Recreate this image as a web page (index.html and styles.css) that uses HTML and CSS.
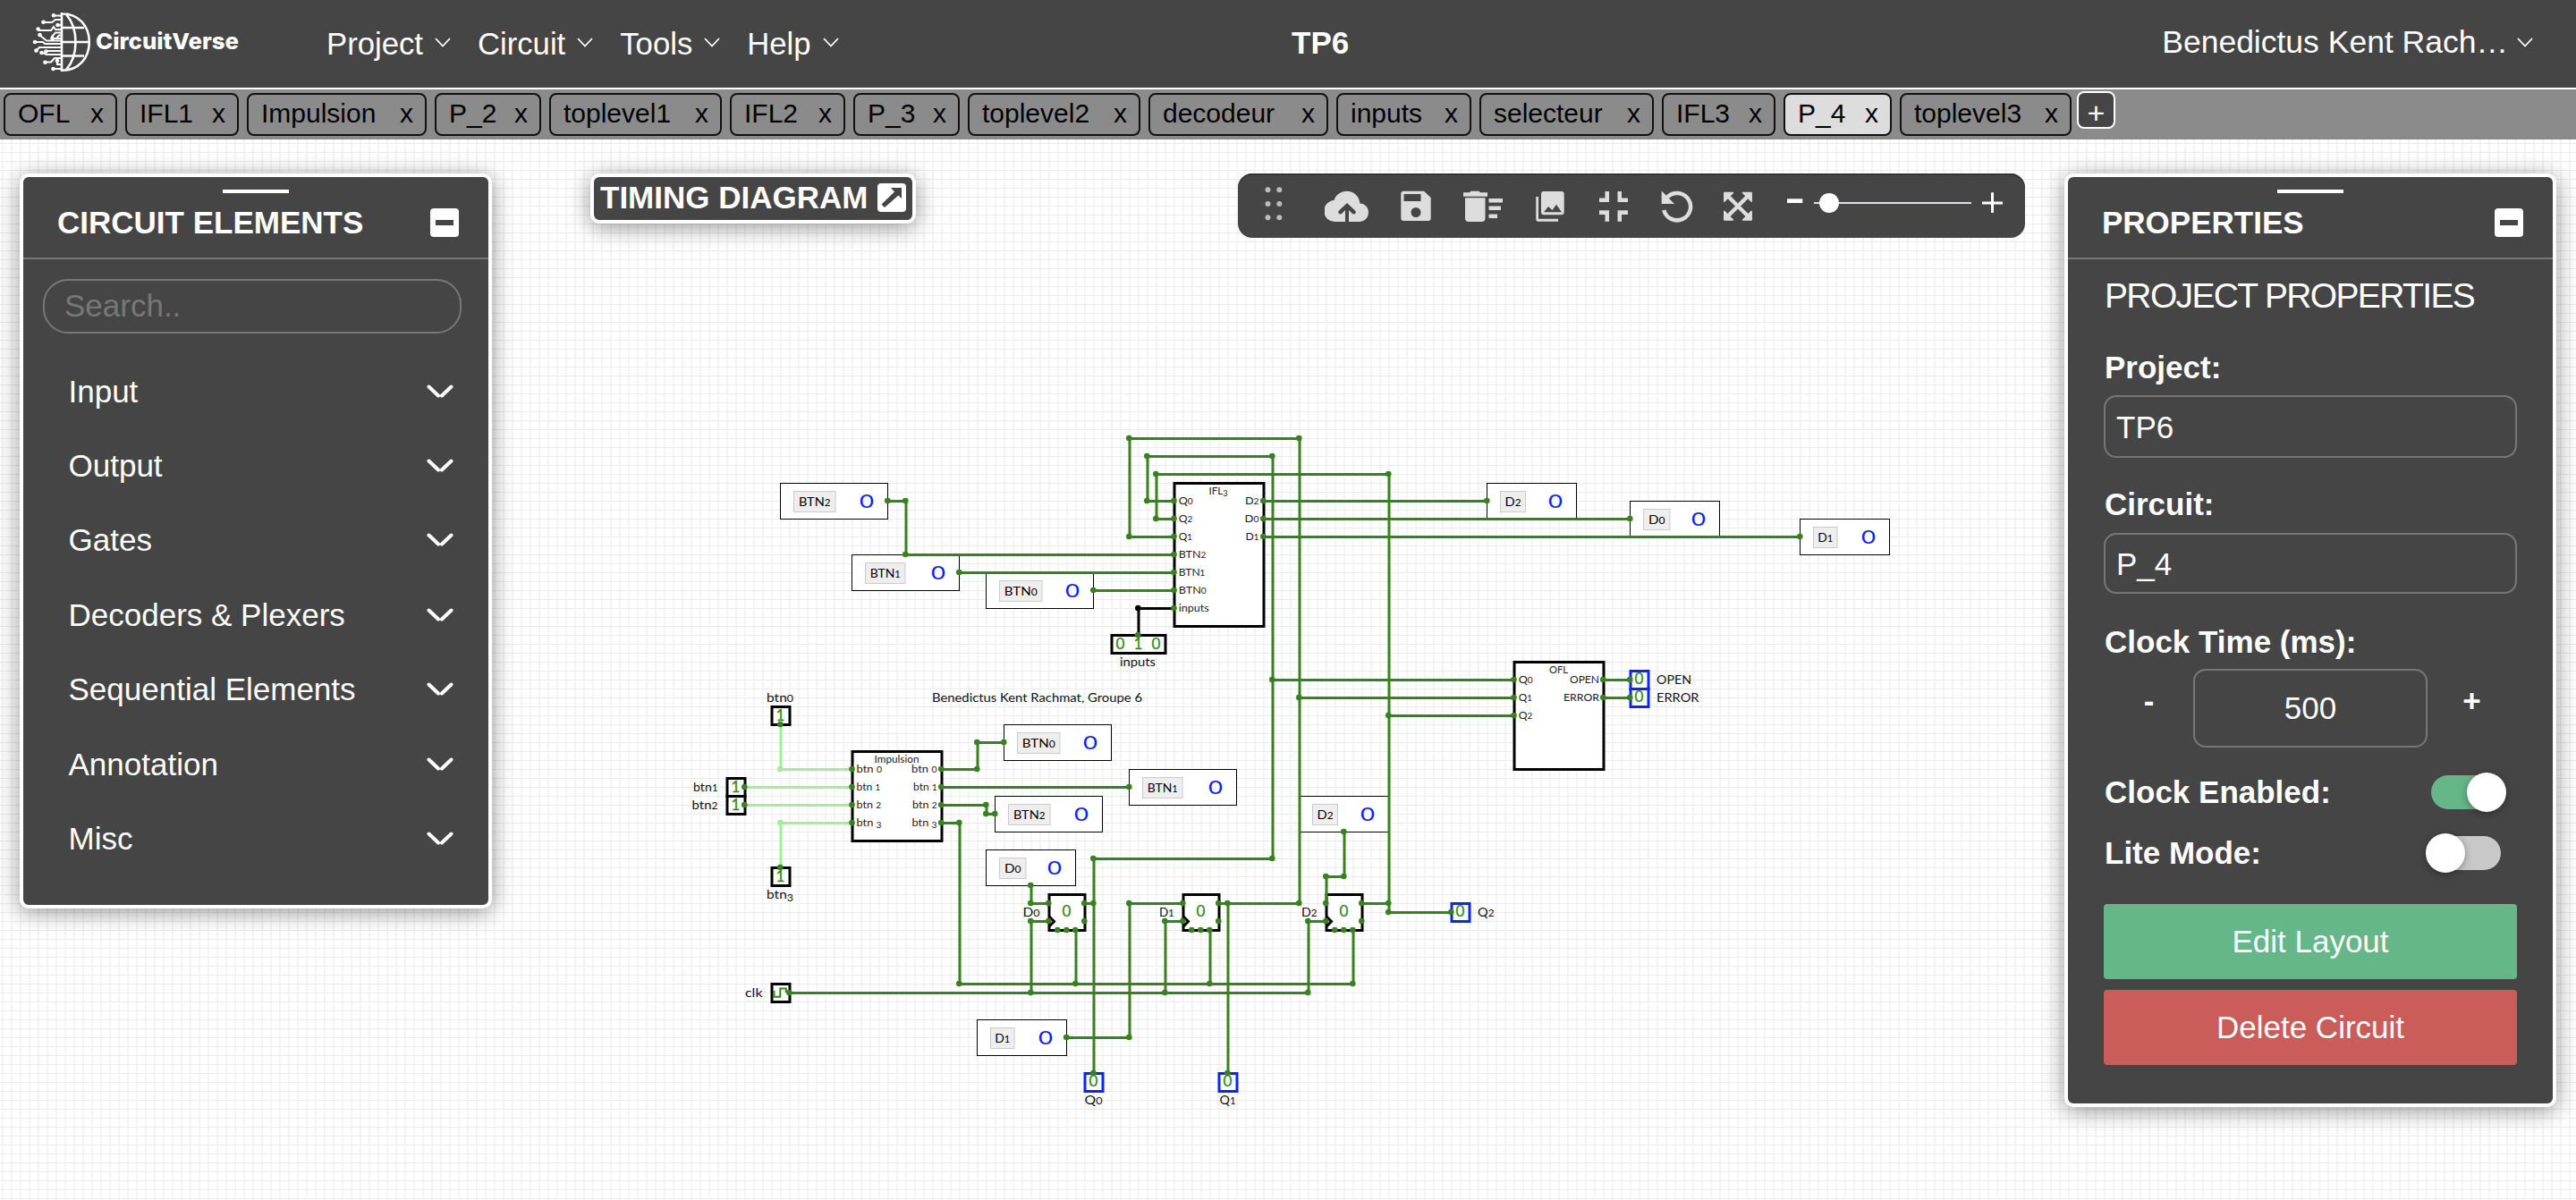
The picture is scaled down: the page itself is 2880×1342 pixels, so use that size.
FILE: index.html
```html
<!DOCTYPE html>
<html lang="en">
<head>
<meta charset="utf-8">
<title>TP6 - CircuitVerse</title>
<link rel="stylesheet" href="styles.css">
</head>
<body>
<header class="navbar">
  <svg class="logo" width="270" height="98" viewBox="20 0 270 98">
    <g fill="none" stroke="#fff" stroke-width="2.6">
      <path d="M69 14V80M69 15.2C88 15.2 99.8 29 99.8 47S88 78.8 69 78.8M74 16C88 32 88 62 74 78M69 31H94M69 47H100M69 62.5H94"/>
    </g>
    <g fill="none" stroke="#fff" stroke-width="2">
      <path d="M69 17.5H61M69 22H62L58 25H49M69 27L65 29M69 33H62L60 30L57 34H43M69 36.500H62L58 41V44M69 39.500H66L63 43H58M69 43H60M69 45.500H52L44 39M69 49H50L48 47H39M69 53H44L41 56M69 57H52M69 61H52L46 58M69 65H61L57 69.500H51M69 72H64V68M69 77H60"/>
    </g>
    <g fill="#fff"><circle cx="60" cy="17.300" r="2.300"/><circle cx="48.500" cy="24.700" r="2.300"/><circle cx="64.500" cy="28" r="2.300"/><circle cx="42.700" cy="32.500" r="2.300"/><circle cx="44.500" cy="39" r="2.300"/><circle cx="58.500" cy="43" r="2.300"/><circle cx="39" cy="47" r="2.300"/><circle cx="40.500" cy="56.500" r="2.300"/><circle cx="51.500" cy="57.500" r="2.300"/><circle cx="46.500" cy="59" r="2.300"/><circle cx="50.500" cy="69.700" r="2.300"/><circle cx="64" cy="68" r="2.300"/><circle cx="59.500" cy="77" r="2.300"/></g>
    <text class="wordmark" x="107" y="55.300" textLength="160" lengthAdjust="spacingAndGlyphs">CircuitVerse</text>
  </svg>
  <nav class="menu">
    <a class="project">Project<svg class="caret" viewBox="0 0 18 11"><path d="M1 1L9 9.500L17 1"/></svg></a>
    <a class="circuit-m">Circuit<svg class="caret" viewBox="0 0 18 11"><path d="M1 1L9 9.500L17 1"/></svg></a>
    <a class="tools">Tools<svg class="caret" viewBox="0 0 18 11"><path d="M1 1L9 9.500L17 1"/></svg></a>
    <a class="help">Help<svg class="caret" viewBox="0 0 18 11"><path d="M1 1L9 9.500L17 1"/></svg></a>
  </nav>
  <div class="project-name">TP6</div>
  <a class="user">Benedictus Kent Rach…<svg class="caret" viewBox="0 0 18 11"><path d="M1 1L9 9.500L17 1"/></svg></a>
</header>

<div class="tabs">
  <div class="tab"><span>OFL</span><span>x</span></div>
  <div class="tab"><span>IFL1</span><span>x</span></div>
  <div class="tab"><span>Impulsion</span><span>x</span></div>
  <div class="tab"><span>P_2</span><span>x</span></div>
  <div class="tab"><span>toplevel1</span><span>x</span></div>
  <div class="tab"><span>IFL2</span><span>x</span></div>
  <div class="tab"><span>P_3</span><span>x</span></div>
  <div class="tab"><span>toplevel2</span><span>x</span></div>
  <div class="tab"><span>decodeur</span><span>x</span></div>
  <div class="tab"><span>inputs</span><span>x</span></div>
  <div class="tab"><span>selecteur</span><span>x</span></div>
  <div class="tab"><span>IFL3</span><span>x</span></div>
  <div class="tab active"><span>P_4</span><span>x</span></div>
  <div class="tab"><span>toplevel3</span><span>x</span></div>
  <button class="add-tab">+</button>
</div>

<main class="canvas">
<svg class="circuit" width="2880" height="1186" viewBox="0 156 2880 1186">
  <!-- Tunnels -->
  <g class="tunnel" transform="translate(872.500 540.500)"><rect width="120" height="40"/><rect class="tag" x="15" y="9" width="46.500" height="23"/><text x="38.200" y="25.200" textLength="35.500" lengthAdjust="spacingAndGlyphs">BTN<tspan class="o">2</tspan></text><text class="val" x="88.400" y="27.700" textLength="16" lengthAdjust="spacingAndGlyphs">0</text></g>
  <g class="tunnel" transform="translate(952.500 620.500)"><rect width="120" height="40"/><rect class="tag" x="15" y="9" width="44.500" height="23"/><text x="37.200" y="25.200" textLength="34" lengthAdjust="spacingAndGlyphs">BTN<tspan class="o">1</tspan></text><text class="val" x="88.400" y="27.700" textLength="16" lengthAdjust="spacingAndGlyphs">0</text></g>
  <g class="tunnel" transform="translate(1102.500 640.500)"><rect width="120" height="40"/><rect class="tag" x="15" y="9" width="47.500" height="23"/><text x="38.700" y="25.200" textLength="37" lengthAdjust="spacingAndGlyphs">BTN<tspan class="o">0</tspan></text><text class="val" x="88.400" y="27.700" textLength="16" lengthAdjust="spacingAndGlyphs">0</text></g>
  <g class="tunnel" transform="translate(1122.500 810.500)"><rect width="120" height="40"/><rect class="tag" x="15" y="9" width="47.500" height="23"/><text x="38.700" y="25.200" textLength="37" lengthAdjust="spacingAndGlyphs">BTN<tspan class="o">0</tspan></text><text class="val" x="88.400" y="27.700" textLength="16" lengthAdjust="spacingAndGlyphs">0</text></g>
  <g class="tunnel" transform="translate(1262.500 860.500)"><rect width="120" height="40"/><rect class="tag" x="15" y="9" width="44.500" height="23"/><text x="37.200" y="25.200" textLength="34" lengthAdjust="spacingAndGlyphs">BTN<tspan class="o">1</tspan></text><text class="val" x="88.400" y="27.700" textLength="16" lengthAdjust="spacingAndGlyphs">0</text></g>
  <g class="tunnel" transform="translate(1112.500 890.500)"><rect width="120" height="40"/><rect class="tag" x="15" y="9" width="46.500" height="23"/><text x="38.200" y="25.200" textLength="35.500" lengthAdjust="spacingAndGlyphs">BTN<tspan class="o">2</tspan></text><text class="val" x="88.400" y="27.700" textLength="16" lengthAdjust="spacingAndGlyphs">0</text></g>
  <g class="tunnel" transform="translate(1102.500 950.500)"><rect width="100" height="40"/><rect class="tag" x="15" y="9" width="29.500" height="23"/><text x="29.700" y="25.200" textLength="18.500" lengthAdjust="spacingAndGlyphs">D<tspan class="o">0</tspan></text><text class="val" x="68.400" y="27.700" textLength="16" lengthAdjust="spacingAndGlyphs">0</text></g>
  <g class="tunnel" transform="translate(1092.500 1140.500)"><rect width="100" height="40"/><rect class="tag" x="15" y="9" width="26.500" height="23"/><text x="28.200" y="25.200" textLength="17" lengthAdjust="spacingAndGlyphs">D<tspan class="o">1</tspan></text><text class="val" x="68.400" y="27.700" textLength="16" lengthAdjust="spacingAndGlyphs">0</text></g>
  <g class="tunnel" transform="translate(1452.500 890.500)"><rect width="100" height="40"/><rect class="tag" x="15" y="9" width="28" height="23"/><text x="29" y="25.200" textLength="18" lengthAdjust="spacingAndGlyphs">D<tspan class="o">2</tspan></text><text class="val" x="68.400" y="27.700" textLength="16" lengthAdjust="spacingAndGlyphs">0</text></g>
  <g class="tunnel" transform="translate(1662.500 540.500)"><rect width="100" height="40"/><rect class="tag" x="15" y="9" width="28" height="23"/><text x="29" y="25.200" textLength="18" lengthAdjust="spacingAndGlyphs">D<tspan class="o">2</tspan></text><text class="val" x="68.400" y="27.700" textLength="16" lengthAdjust="spacingAndGlyphs">0</text></g>
  <g class="tunnel" transform="translate(1822.500 560.500)"><rect width="100" height="40"/><rect class="tag" x="15" y="9" width="29.500" height="23"/><text x="29.700" y="25.200" textLength="18.500" lengthAdjust="spacingAndGlyphs">D<tspan class="o">0</tspan></text><text class="val" x="68.400" y="27.700" textLength="16" lengthAdjust="spacingAndGlyphs">0</text></g>
  <g class="tunnel" transform="translate(2012.500 580.500)"><rect width="100" height="40"/><rect class="tag" x="15" y="9" width="26.500" height="23"/><text x="28.200" y="25.200" textLength="17" lengthAdjust="spacingAndGlyphs">D<tspan class="o">1</tspan></text><text class="val" x="68.400" y="27.700" textLength="16" lengthAdjust="spacingAndGlyphs">0</text></g>

  <!-- Subcircuits, flip-flops, inputs -->
  <g class="box">
    <rect x="1313" y="540.500" width="100" height="160"/>
    <rect x="1693" y="740.500" width="100" height="120"/>
    <rect x="953" y="840.500" width="100" height="100"/>
    <rect x="1173" y="1000.500" width="40" height="40"/>
    <rect x="1323" y="1000.500" width="40" height="40"/>
    <rect x="1483" y="1000.500" width="40" height="40"/>
    <path d="M1173 1025L1178.500 1030.500L1173 1036M1323 1025L1328.500 1030.500L1323 1036M1483 1025L1488.500 1030.500L1483 1036"/>
    <rect x="1243" y="710.500" width="60" height="20"/>
    <rect x="863" y="790.500" width="20" height="20"/>
    <rect x="813" y="870.500" width="20" height="20"/>
    <rect x="813" y="890.500" width="20" height="20"/>
    <rect x="863" y="970.500" width="20" height="20"/>
    <rect x="863" y="1100.500" width="20" height="20"/>
  </g>
  <g class="box out">
    <rect x="1823" y="750.500" width="20" height="20"/>
    <rect x="1823" y="770.500" width="20" height="20"/>
    <rect x="1623" y="1010.500" width="20" height="20"/>
    <rect x="1213" y="1200.500" width="20" height="20"/>
    <rect x="1363" y="1200.500" width="20" height="20"/>
  </g>

  <!-- Wires -->
  <path class="wire high" d="M873 810V860.500H953M833 880.500H953M833 900.500H953M953 920.500H873V970"/>
  <path class="wire bus" d="M1313 680.500H1273V710"/>
  <path class="wire" d="M993 560.500H1013V620.500H1313M1073 640.500H1313M1223 660.500H1313
    M1313 560.500H1283V510.500H1423V960.500H1223V1200
    M1313 580.500H1293V530.500H1553V1020.500H1623
    M1313 600.500H1263V490.500H1453V1010.500H1363M1373 1010V1200
    M1413 560.500H1663M1413 580.500H1823M1413 600.500H2013
    M1423 760.500H1693M1453 780.500H1693M1553 800.500H1693M1793 760.500H1823M1793 780.500H1823
    M1053 860.500H1093V830.500H1123M1053 880.500H1263M1053 900.500H1103V910.500H1113M1053 920.500H1073V1100.500H1513V1040
    M1153 990V1010.500H1173M1213 1010.500H1223M1203 1040V1100M1353 1040V1100
    M883 1110.500H1463V1030.500H1483M1153 1110V1030.500H1173M1303 1110V1030.500H1323
    M1193 1160.500H1263V1010.500H1323M1503 930V980.500H1483V1010M1523 1010.500H1553"/>
  <path class="clock" d="M865.500 1108V1114.800H872.300V1105.500H878.800V1110"/>

  <!-- Nodes: zero-length round-capped strokes -->
  <path class="node high" d="M872.300 860h0M872.300 920h0"/>
  <path class="node bus" d="M1272.300 680h0"/>
  <path class="node" d="M992.300 560h0M1012.300 560h0M1012.300 620h0M1072.300 640h0M1222.300 660h0
    M1262.300 490h0M1452.300 490h0M1282.300 510h0M1422.300 510h0M1292.300 530h0M1552.300 530h0
    M1282.300 560h0M1292.300 580h0M1262.300 600h0
    M1312.500 560h0M1312.500 580h0M1312.500 600h0M1312.500 620h0M1312.500 640h0M1312.500 660h0M1312.500 680h0M1272.300 710h0
    M1412.300 560h0M1412.300 580h0M1412.300 600h0M1662.300 560h0M1822.300 580h0M2012.300 600h0
    M1422.300 760h0M1452.300 780h0M1552.300 800h0M1692.500 760h0M1692.500 780h0M1692.500 800h0M1792.300 760h0M1792.300 780h0M1822.300 760h0M1822.300 780h0
    M872.300 810h0M832.300 880h0M832.300 900h0M872.300 970h0M882.300 1110h0
    M952.500 860h0M952.500 880h0M952.500 900h0M952.500 920h0M1052.300 860h0M1052.300 880h0M1052.300 900h0M1052.300 920h0
    M1092.300 860h0M1092.300 830h0M1122.300 830h0M1262.300 880h0M1102.300 900h0M1102.300 910h0M1112.300 910h0M1072.300 920h0M1072.300 1100h0
    M1152.300 990h0M1152.300 1010h0M1172.300 1010h0M1172.300 1030h0M1152.300 1030h0M1152.300 1110h0M1182.300 1040h0M1192.300 1040h0M1202.300 1040h0M1202.300 1100h0
    M1212.300 1010h0M1212.300 1030h0M1222.300 1010h0M1222.300 960h0M1422.300 960h0M1222.300 1200h0
    M1262.300 1010h0M1262.300 1160h0M1192.300 1160h0M1322.300 1010h0M1322.300 1030h0M1302.300 1030h0M1302.300 1110h0
    M1332.300 1040h0M1342.300 1040h0M1352.300 1040h0M1352.300 1100h0M1362.300 1010h0M1362.300 1030h0M1372.300 1010h0M1372.300 1200h0M1452.300 1010h0
    M1462.300 1110h0M1462.300 1030h0M1482.300 1030h0M1482.300 1010h0M1482.300 980h0M1502.300 980h0M1502.300 930h0
    M1492.300 1040h0M1502.300 1040h0M1512.300 1040h0M1512.300 1100h0M1522.300 1010h0M1522.300 1030h0M1552.300 1010h0M1552.300 1020h0M1622.300 1020h0"/>

  <!-- Bit values -->
  <g class="bit">
    <text x="1252.500" y="725.500">0</text><text x="1272.500" y="725.500">1</text><text x="1292.500" y="725.500">0</text>
    <text x="872.500" y="805.500">1</text><text x="822.500" y="885.500">1</text><text x="822.500" y="905.500">1</text><text x="872.500" y="985.500">1</text>
    <text x="1192.500" y="1025.300">0</text><text x="1342.500" y="1025.300">0</text><text x="1502.500" y="1025.300">0</text>
    <text x="1832.500" y="765.300">0</text><text x="1832.500" y="785.300">0</text><text x="1632.500" y="1025.300">0</text>
    <text x="1222.500" y="1215.300">0</text><text x="1372.500" y="1215.300">0</text>
  </g>

  <!-- Pin names -->
  <g class="pin">
    <text class="mid" x="1362" y="552.700" textLength="21" lengthAdjust="spacingAndGlyphs">IFL<tspan class="o" dy="2">3</tspan></text>
    <text x="1317.700" y="564.200" textLength="16" lengthAdjust="spacingAndGlyphs">Q<tspan class="o">0</tspan></text>
    <text x="1317.700" y="584.200" textLength="15.500" lengthAdjust="spacingAndGlyphs">Q<tspan class="o">2</tspan></text>
    <text x="1317.700" y="604.200" textLength="15" lengthAdjust="spacingAndGlyphs">Q<tspan class="o">1</tspan></text>
    <text x="1317.700" y="624.200" textLength="30.500" lengthAdjust="spacingAndGlyphs">BTN<tspan class="o">2</tspan></text>
    <text x="1317.700" y="644.200" textLength="29.500" lengthAdjust="spacingAndGlyphs">BTN<tspan class="o">1</tspan></text>
    <text x="1317.700" y="664.200" textLength="31" lengthAdjust="spacingAndGlyphs">BTN<tspan class="o">0</tspan></text>
    <text x="1317.700" y="684.200" textLength="34" lengthAdjust="spacingAndGlyphs">inputs</text>
    <text class="end" x="1407.500" y="564.200" textLength="15.500" lengthAdjust="spacingAndGlyphs">D<tspan class="o">2</tspan></text>
    <text class="end" x="1407.500" y="584.200" textLength="16" lengthAdjust="spacingAndGlyphs">D<tspan class="o">0</tspan></text>
    <text class="end" x="1407.500" y="604.200" textLength="15" lengthAdjust="spacingAndGlyphs">D<tspan class="o">1</tspan></text>
    <text class="mid" x="1742.500" y="752.700" textLength="21" lengthAdjust="spacingAndGlyphs">OFL</text>
    <text x="1697.700" y="764.200" textLength="16" lengthAdjust="spacingAndGlyphs">Q<tspan class="o">0</tspan></text>
    <text x="1697.700" y="784.200" textLength="15" lengthAdjust="spacingAndGlyphs">Q<tspan class="o">1</tspan></text>
    <text x="1697.700" y="804.200" textLength="15.500" lengthAdjust="spacingAndGlyphs">Q<tspan class="o">2</tspan></text>
    <text class="end" x="1788" y="764.200" textLength="33" lengthAdjust="spacingAndGlyphs">OPEN</text>
    <text class="end" x="1788" y="784.200" textLength="40" lengthAdjust="spacingAndGlyphs">ERROR</text>
    <text class="mid" x="1002.500" y="852.700" textLength="50" lengthAdjust="spacingAndGlyphs">Impulsion</text>
    <text x="957.500" y="864.200" textLength="28.500" lengthAdjust="spacingAndGlyphs">btn <tspan class="o">0</tspan></text>
    <text x="957.500" y="884.200" textLength="26.500" lengthAdjust="spacingAndGlyphs">btn <tspan class="o">1</tspan></text>
    <text x="957.500" y="904.200" textLength="27.500" lengthAdjust="spacingAndGlyphs">btn <tspan class="o">2</tspan></text>
    <text x="957.500" y="924.200" textLength="28" lengthAdjust="spacingAndGlyphs">btn <tspan class="o" dy="2">3</tspan></text>
    <text class="end" x="1047.500" y="864.200" textLength="28.500" lengthAdjust="spacingAndGlyphs">btn <tspan class="o">0</tspan></text>
    <text class="end" x="1047.500" y="884.200" textLength="26.500" lengthAdjust="spacingAndGlyphs">btn <tspan class="o">1</tspan></text>
    <text class="end" x="1047.500" y="904.200" textLength="27.500" lengthAdjust="spacingAndGlyphs">btn <tspan class="o">2</tspan></text>
    <text class="end" x="1047.500" y="924.200" textLength="28" lengthAdjust="spacingAndGlyphs">btn <tspan class="o" dy="2">3</tspan></text>
  </g>

  <!-- Element labels -->
  <g class="label">
    <text class="mid" x="1272" y="744.500" textLength="40" lengthAdjust="spacingAndGlyphs">inputs</text>
    <text x="1042" y="785" textLength="235" lengthAdjust="spacingAndGlyphs">Benedictus Kent Rachmat, Groupe 6</text>
    <text class="mid" x="872" y="785" textLength="30" lengthAdjust="spacingAndGlyphs">btn<tspan class="o">0</tspan></text>
    <text class="end" x="802.500" y="885" textLength="27.500" lengthAdjust="spacingAndGlyphs">btn<tspan class="o">1</tspan></text>
    <text class="end" x="802.500" y="905" textLength="29" lengthAdjust="spacingAndGlyphs">btn<tspan class="o">2</tspan></text>
    <text class="mid" x="872" y="1005" textLength="30" lengthAdjust="spacingAndGlyphs">btn<tspan class="o" dy="2.500">3</tspan></text>
    <text class="end" x="852.500" y="1115" textLength="19.500" lengthAdjust="spacingAndGlyphs">clk</text>
    <text class="end" x="1162.500" y="1025" textLength="19" lengthAdjust="spacingAndGlyphs">D<tspan class="o">0</tspan></text>
    <text class="end" x="1312.500" y="1025" textLength="16.500" lengthAdjust="spacingAndGlyphs">D<tspan class="o">1</tspan></text>
    <text class="end" x="1472.500" y="1025" textLength="17.500" lengthAdjust="spacingAndGlyphs">D<tspan class="o">2</tspan></text>
    <text x="1852" y="765" textLength="39" lengthAdjust="spacingAndGlyphs">OPEN</text>
    <text x="1852" y="785" textLength="47.500" lengthAdjust="spacingAndGlyphs">ERROR</text>
    <text x="1652" y="1025" textLength="18.500" lengthAdjust="spacingAndGlyphs">Q<tspan class="o">2</tspan></text>
    <text class="mid" x="1222.500" y="1235" textLength="20" lengthAdjust="spacingAndGlyphs">Q<tspan class="o">0</tspan></text>
    <text class="mid" x="1372.500" y="1235" textLength="18" lengthAdjust="spacingAndGlyphs">Q<tspan class="o">1</tspan></text>
  </g>
</svg>

<section class="panel elements">
  <div class="handle"></div>
  <div class="panel-head"><h2>CIRCUIT ELEMENTS</h2><span class="minimize"></span></div>
  <div class="search">Search..</div>
  <ul class="list">
    <li>Input<svg viewBox="0 0 30 16"><path d="M2.500 2.500L13 12.500M17 12.500L27.500 2.500"/></svg></li>
    <li>Output<svg viewBox="0 0 30 16"><path d="M2.500 2.500L13 12.500M17 12.500L27.500 2.500"/></svg></li>
    <li>Gates<svg viewBox="0 0 30 16"><path d="M2.500 2.500L13 12.500M17 12.500L27.500 2.500"/></svg></li>
    <li>Decoders &amp; Plexers<svg viewBox="0 0 30 16"><path d="M2.500 2.500L13 12.500M17 12.500L27.500 2.500"/></svg></li>
    <li>Sequential Elements<svg viewBox="0 0 30 16"><path d="M2.500 2.500L13 12.500M17 12.500L27.500 2.500"/></svg></li>
    <li>Annotation<svg viewBox="0 0 30 16"><path d="M2.500 2.500L13 12.500M17 12.500L27.500 2.500"/></svg></li>
    <li>Misc<svg viewBox="0 0 30 16"><path d="M2.500 2.500L13 12.500M17 12.500L27.500 2.500"/></svg></li>
  </ul>
</section>

<section class="timing">
  <h2>TIMING DIAGRAM</h2>
  <svg width="32" height="32" viewBox="0 0 32 32"><rect width="32" height="32" rx="4" fill="#fff"/><path d="M15 5H27V17L23.500 13.500L8 27L4.500 23.500L19 9.500Z" fill="#454545"/></svg>
</section>

<section class="toolbar">
  <svg width="20" height="72" viewBox="30 0 20 72" fill="#bbb"><circle cx="33.500" cy="18.300" r="3"/><circle cx="46.300" cy="18.300" r="3"/><circle cx="33.500" cy="34" r="3"/><circle cx="46.300" cy="34" r="3"/><circle cx="33.500" cy="49.300" r="3"/><circle cx="46.300" cy="49.300" r="3"/></svg>
  <svg width="50" height="72" viewBox="-25 0 50 72"><path fill="#ddd" d="M-2 54H-13A11.500 11.500 0 0 1-14.500 30C-13 24 -7 19.700 0 19.700C7.500 19.700 13.500 25 14.500 33.500C20 33.700 24 38 24 43.500S19.500 54 14 54H2V41L6 45C9 46.500 11 43.500 9 41.500L0 33L-9 41.500C-11 44 -8.500 46.500 -6 45L-2 41Z"/></svg>
  <svg width="34" height="72" viewBox="-17 0 34 72"><path fill="#ddd" fill-rule="evenodd" d="M-13.500 19.700H9L16.700 27V50Q16.700 53 13.700 53H-13.500Q-16.700 53 -16.700 50V23Q-16.700 19.700 -13.500 19.700ZM-13.500 23V31H5.500V23ZM0 38A5.500 5.500 0 1 0 0 49A5.500 5.500 0 1 0 0 38Z"/></svg>
  <svg width="44" height="72" viewBox="-22 0 44 72"><path fill="#ddd" d="M-22 21.300H-15L-13.500 19.700H-4.500L-3 21.300H5V25.700H-22ZM-20 27.300H2.500V50Q2.500 54 -1.500 54H-16Q-20 54 -20 50ZM6.500 28H22V32.500H6.500ZM6.500 36.500H20V41H6.500ZM6.500 45.500H16V50H6.500Z"/></svg>
  <svg width="34" height="72" viewBox="-16 0 34 72"><path fill="#ddd" fill-rule="evenodd" d="M-7 20H13Q15.700 20 15.700 23V43Q15.700 46.300 12.500 46.300H-7Q-10 46.300 -10 43V23Q-10 20 -7 20ZM-7 43.300H13L7 34.700L2.500 41L-2 37ZM-15.700 26H-13V50.700H9V53.700H-13Q-15.700 53.700 -15.700 51Z"/></svg>
  <svg width="34" height="72" viewBox="-17 0 34 72"><path fill="#ddd" d="M-9.500 20H-5V32H-16V27.500H-9.500ZM4.500 20H9V27.500H16V32H4.500ZM-16 41.300H-5V53.700H-9.500V46H-16ZM4.500 41.300H16V46H9V53.700H4.500Z"/></svg>
  <svg width="36" height="72" viewBox="-18 0 36 72"><path fill="none" stroke="#ddd" stroke-width="4.500" d="M-11 26.500A15.200 15.200 0 1 1-14.800 41"/><path fill="#ddd" d="M-17.300 19.500V34H-3Z"/></svg>
  <svg width="34" height="72" viewBox="-17 0 34 72"><path stroke="#ddd" stroke-width="4.500" d="M-12 24.500L12 48.500M12 24.500L-12 48.500"/><path fill="#ddd" stroke="#ddd" stroke-width="1.500" stroke-linejoin="round" d="M-15.200 21.500H-5.500L-15.200 31.200ZM15.200 21.500V31.200L5.500 21.500ZM-15.200 52V42.300L-5.500 52ZM15.200 52H5.500L15.200 42.300Z"/></svg>
  <svg width="287" height="72" viewBox="1976 194 287 72"><path fill="#fff" d="M1998 222.300H2015.300V227H1998Z"/><path stroke="#dde" stroke-width="2" d="M2028 227H2204"/><circle cx="2045" cy="227" r="11" fill="#fff"/><path stroke="#fff" stroke-width="3" d="M2216 227H2239M2227.500 215.300V238"/></svg>
</section>

<section class="panel properties">
  <div class="handle"></div>
  <div class="panel-head"><h2>PROPERTIES</h2><span class="minimize"></span></div>
  <div class="props">
    <h3>PROJECT PROPERTIES</h3>
    <label>Project:</label>
    <div class="field f-project">TP6</div>
    <label class="l-circuit">Circuit:</label>
    <div class="field f-circuit">P_4</div>
    <label class="l-clock">Clock Time (ms):</label>
    <div class="stepper"><b>-</b><div class="field f-time">500</div><b>+</b></div>
    <div class="switch-row r-clock"><label>Clock Enabled:</label><span class="switch on"></span></div>
    <div class="switch-row r-lite"><label>Lite Mode:</label><span class="switch"></span></div>
    <button class="btn green">Edit Layout</button>
    <button class="btn red">Delete Circuit</button>
  </div>
</section>
</main>
</body>
</html>
```
FILE: styles.css
```css
* { box-sizing: border-box; }
body {
  margin: 0;
  width: 2880px;
  height: 1342px;
  overflow: hidden;
  display: flex;
  flex-direction: column;
  font-family: "Liberation Sans", Arial, sans-serif;
  font-size: 35px;
  color: #fff;
}
h2, h3, ul { margin: 0; padding: 0; font-size: inherit; }
button { font: inherit; color: #fff; border: 0; padding: 0; }

/* Navigation bar */
.navbar {
  height: 100px;
  flex: none;
  display: grid;
  grid-template-columns: 270px 1154px 64px 1fr;
  padding: 0 48px 0 20px;
  background: #454545;
  border-bottom: 2px solid #fff;
  line-height: 40px;
}
.logo { display: block; }
.wordmark { font: 800 25px Inter, "Liberation Sans", sans-serif; fill: #fff; }
.menu { display: flex; gap: 30px; padding: 29px 0 0 75px; font-size: 34.700px; }
.menu a, .user { display: flex; align-items: flex-start; gap: 13px; white-space: nowrap; }
.caret { width: 18px; height: 11px; margin-top: 13px; fill: none; stroke: #fff; stroke-width: 1.8; }
.project-name { font-weight: bold; padding-top: 28px; }
.user { justify-content: flex-end; padding-top: 27px; gap: 10px; font-size: 35.500px; }
.user .caret { margin-top: 15px; }

/* Circuit tabs */
.tabs {
  height: 56px;
  flex: none;
  display: grid;
  grid-template-columns: 136px 136px 210px 128px 202px 138px 128px 202px 210px 160px 204px 136px 130px 198px auto;
  justify-content: start;
  padding: 2px 0 0 4px;
  background: #8b8b8b;
  font-size: 30px;
  color: #000;
}
.tab {
  display: flex;
  justify-content: space-between;
  height: 48px;
  margin: 2px 9px 0 0;
  padding: 0 13px 0 14px;
  border: 2px solid #111;
  border-radius: 8px;
  line-height: 41px;
}
.tab:last-of-type { margin-right: 6px; }
.tab.active { background: #ddd; }
.add-tab {
  width: 43px;
  height: 42px;
  border: 2px solid #fff;
  border-radius: 8px;
  background: #454545;
  font-size: 34px;
  line-height: 44px;
}

/* Canvas */
.canvas {
  flex: 1;
  position: relative;
  background:
    linear-gradient(#ebebeb 1px, transparent 1px) 0 4px / 10px 10px,
    linear-gradient(90deg, #f4f4f4 2px, transparent 2px) 2px 0 / 10px 10px,
    #fff;
}
.circuit { display: block; font-family: Lato, "Liberation Sans", sans-serif; }
.tunnel rect { fill: #fff; stroke: #000; stroke-width: 1; }
.tunnel .tag { fill: #eee; stroke: #ccc; }
.tunnel text { font-size: 13.500px; text-anchor: middle; }
.tunnel .val { font-size: 21.500px; fill: #0b24fb; text-anchor: start; }
.tunnel .o, .o { font-size: 80%; }
.box { fill: #fff; stroke: #000; stroke-width: 3; }
.box path { fill: none; }
.out { stroke: #0b24fb; }
.wire { fill: none; stroke: #37821f; stroke-width: 3; }
.clock { fill: none; stroke: #37821f; stroke-width: 2; }
.node { fill: none; stroke: #37821f; stroke-width: 6.600; stroke-linecap: round; }
.high { stroke: #a5ec9a; }
.bus { stroke: #000; }
.bit { font-size: 17px; fill: #338a1e; stroke: #338a1e; stroke-width: .3; text-anchor: middle; }
.pin { font-size: 11.200px; fill: #222; }
.label { font-size: 13.500px; fill: #111; }
.mid { text-anchor: middle; }
.end { text-anchor: end; }

/* Floating panels */
.panel {
  position: absolute;
  top: 38px;
  background: #454545;
  border: 4px solid #fff;
  border-radius: 10px;
  box-shadow: 0 4px 26px rgba(0, 0, 0, .42);
}
.elements { left: 22px; width: 528px; height: 822px; }
.properties { left: 2308px; width: 550px; height: 1044px; }
.handle { width: 74px; height: 4px; margin: 14px auto 0; background: #fff; }
.panel-head {
  height: 74px;
  display: flex;
  justify-content: space-between;
  padding: 13px 33px 0 38px;
  border-bottom: 2px solid #777;
  line-height: 40px;
}
.minimize {
  width: 32px;
  height: 32px;
  margin-top: 4px;
  border-radius: 4px;
  background: linear-gradient(#454545, #454545) center / 20px 6px no-repeat #fff;
}
.search {
  height: 61px;
  margin: 22px 30px 0 22px;
  padding-left: 22px;
  border: 2px solid #777;
  border-radius: 28px;
  color: #777;
  line-height: 55px;
}
.list { list-style: none; margin-top: 23px; }
.list li {
  display: flex;
  justify-content: space-between;
  align-items: center;
  height: 83.400px;
  padding: 0 39px 0 50.500px;
}
.list svg { width: 30px; height: 16px; fill: none; stroke: #fff; stroke-width: 4; stroke-linecap: round; }

.timing {
  position: absolute;
  left: 660px;
  top: 38px;
  width: 364px;
  height: 56px;
  display: flex;
  align-items: center;
  gap: 11px;
  padding: 0 0 3px 7px;
  border: 4px solid #fff;
  border-radius: 10px;
  background: #454545;
  box-shadow: 0 4px 26px rgba(0, 0, 0, .42);
}

.toolbar {
  position: absolute;
  left: 1384px;
  top: 38px;
  width: 880px;
  height: 72px;
  display: grid;
  grid-template-columns: 80px 84px 69px 82px 69px 71.500px 71px 65.500px 287px;
  justify-items: center;
  border-radius: 16px;
  background: #454545;
  box-shadow: inset 0 2px #333;
}

.props { display: flex; flex-direction: column; padding: 0 40px; line-height: 40px; }
h3 { margin: 21px 0 0 1px; font-size: 39px; font-weight: normal; letter-spacing: -1.650px; white-space: nowrap; }
.props label { font-weight: bold; margin: 40px 0 0 1px; }
.field { border: 2px solid #777; border-radius: 14px; padding-left: 12px; }
.f-project { height: 70px; margin-top: 11px; line-height: 67px; }
.props .l-circuit { margin-top: 32px; }
.f-circuit { height: 68px; margin-top: 12px; line-height: 66px; }
.props .l-clock { margin-top: 34px; }
.stepper {
  display: grid;
  grid-template-columns: 99px 262px 99px;
  justify-content: center;
  height: 84px;
  margin-top: 10px;
  text-align: center;
}
.stepper b { line-height: 72px; }
.stepper .f-time { padding: 0; line-height: 84px; }
.switch-row { display: flex; justify-content: space-between; align-items: center; height: 40px; }
.props .switch-row label { margin-top: 0; }
.r-clock { margin-top: 34px; }
.r-lite { margin-top: 28px; }
.switch {
  position: relative;
  width: 78px;
  height: 38px;
  margin-right: 18px;
  border-radius: 19px;
  background: #c8c8c8;
}
.switch.on { background: #65b688; }
.switch::after {
  content: "";
  position: absolute;
  left: -6px;
  top: -3px;
  width: 44px;
  height: 44px;
  border-radius: 50%;
  background: #fff;
  box-shadow: 0 2px 8px rgba(0, 0, 0, .35);
}
.switch.on::after { left: 40px; }
.btn { height: 84px; border-radius: 4px; line-height: 84px; }
.green { margin-top: 37px; background: #65b688; }
.red { margin-top: 12px; background: #ca5c5a; }
```
